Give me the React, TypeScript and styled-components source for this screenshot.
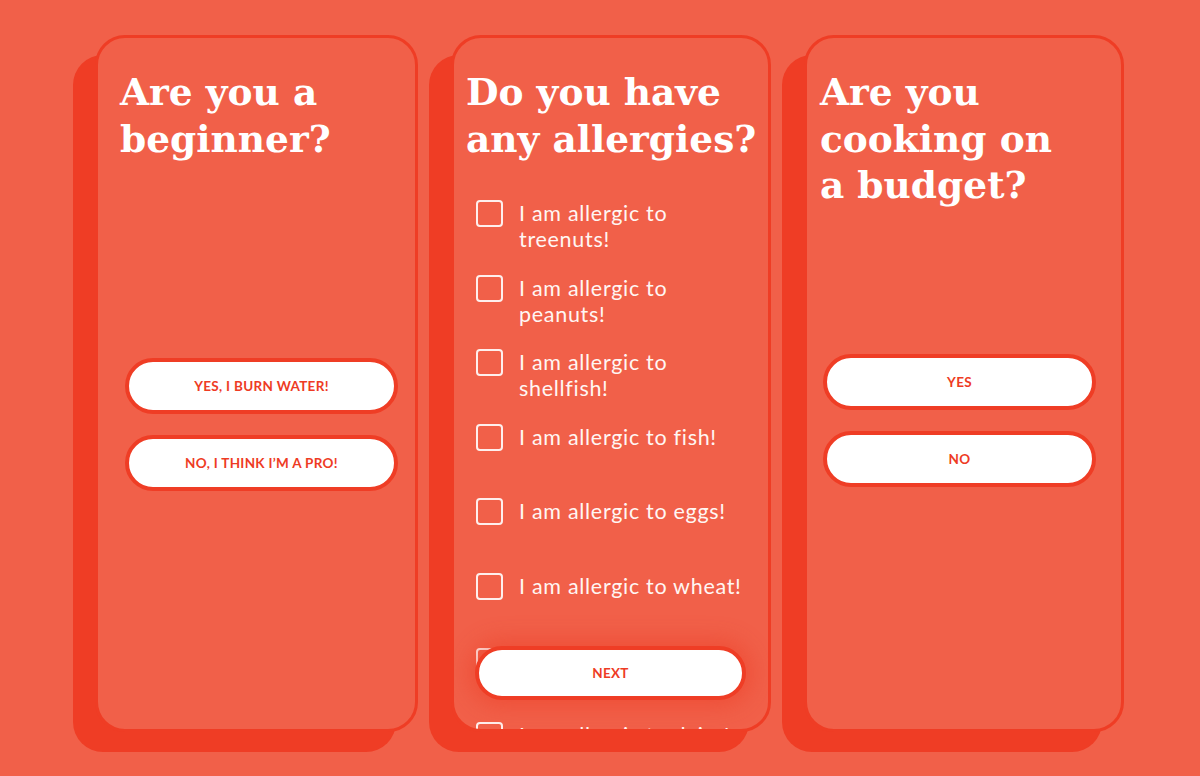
import React from 'react';
import styled, { createGlobalStyle } from 'styled-components';

const BG = '#f16049';
const ACCENT = '#ef3d25';

const GlobalStyle = createGlobalStyle`
  html, body {
    margin: 0;
    padding: 0;
    background: ${BG};
  }
  body {
    font-family: Lato, 'Noto Sans', sans-serif;
  }
`;

const Stage = styled.div`
  display: flex;
  align-items: flex-start;
  gap: 33px;
  width: 1200px;
  height: 776px;
  padding: 35px 0 0 95px;
  box-sizing: border-box;
  overflow: hidden;
`;

const Card = styled.section<{ $width: number }>`
  position: relative;
  flex: none;
  width: ${(p) => p.$width}px;
  height: 697px;
  box-sizing: border-box;
  border: 3px solid ${ACCENT};
  border-radius: 30px;
  background: ${BG};
  box-shadow: -22px 20px 0 ${ACCENT};
  overflow: hidden;
`;

const Title = styled.h1<{ $inset: number }>`
  margin: 31px 0 0 ${(p) => p.$inset}px;
  font-family: 'DejaVu Serif', 'Liberation Serif', serif;
  font-weight: 700;
  font-size: 37.5px;
  line-height: 46.5px;
  letter-spacing: 0;
  color: #ffffff;
`;

const ButtonStack = styled.div<{ $top: number; $left: number; $right: number }>`
  display: flex;
  flex-direction: column;
  gap: 21px;
  margin: ${(p) => `${p.$top}px ${p.$right}px 0 ${p.$left}px`};
`;

const PillButton = styled.button`
  display: flex;
  align-items: center;
  justify-content: center;
  width: 100%;
  height: 56px;
  box-sizing: border-box;
  border: 4px solid ${ACCENT};
  border-radius: 28px;
  background: #ffffff;
  font-family: Lato, 'Noto Sans', sans-serif;
  font-weight: 700;
  font-size: 13.5px;
  letter-spacing: 0.3px;
  color: #ee3b24;
  text-transform: uppercase;
  cursor: pointer;
`;

const NextButton = styled(PillButton)`
  position: absolute;
  left: 21px;
  right: 22px;
  bottom: 29px;
  width: auto;
  height: 54px;
  box-shadow: 0 0 22px 6px rgba(236, 58, 34, 0.45);
`;

const AllergyList = styled.ul`
  list-style: none;
  display: flex;
  flex-direction: column;
  gap: 22.6px;
  margin: 38px 0 0 22px;
  padding: 0;
`;

const AllergyRow = styled.li`
  display: flex;
  align-items: flex-start;
  gap: 16px;
  min-height: 52px;
`;

const Checkbox = styled.span`
  flex: none;
  width: 27px;
  height: 27px;
  box-sizing: border-box;
  border: 2.5px solid rgba(255, 255, 255, 0.9);
  border-radius: 4px;
`;

const AllergyLabel = styled.span`
  width: 234px;
  margin-top: 0;
  font-size: 21.5px;
  line-height: 26px;
  letter-spacing: 0.7px;
  color: #fff6f3;
`;

const allergens = ['treenuts', 'peanuts', 'shellfish', 'fish', 'eggs', 'wheat', 'soy', 'dairy'];

export default function App() {
  return (
    <>
      <GlobalStyle />
      <Stage>
        <Card $width={323}>
          <Title $inset={22}>
            Are you a
            <br />
            beginner?
          </Title>
          <ButtonStack $top={196} $left={27} $right={17}>
            <PillButton>Yes, I burn water!</PillButton>
            <PillButton>No, I think I’m a pro!</PillButton>
          </ButtonStack>
        </Card>

        <Card $width={320}>
          <Title $inset={12}>
            Do you have
            <br />
            any allergies?
          </Title>
          <AllergyList>
            {allergens.map((a) => (
              <AllergyRow key={a}>
                <Checkbox />
                <AllergyLabel>I am allergic to {a}!</AllergyLabel>
              </AllergyRow>
            ))}
          </AllergyList>
          <NextButton>Next</NextButton>
        </Card>

        <Card $width={320}>
          <Title $inset={13}>
            Are you
            <br />
            cooking on
            <br />a budget?
          </Title>
          <ButtonStack $top={145} $left={16} $right={25}>
            <PillButton>Yes</PillButton>
            <PillButton>No</PillButton>
          </ButtonStack>
        </Card>
      </Stage>
    </>
  );
}
